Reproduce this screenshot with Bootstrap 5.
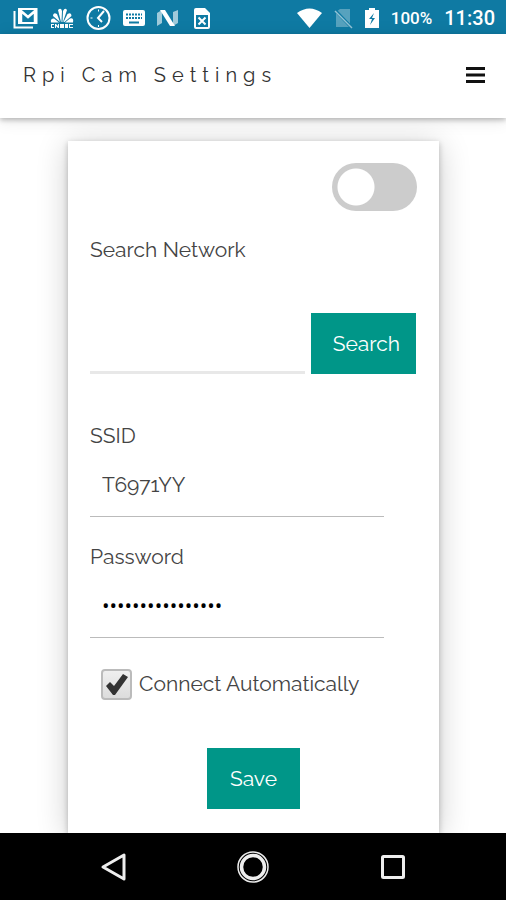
<!DOCTYPE html>
<html lang="en">
<head>
<meta charset="utf-8">
<meta name="viewport" content="width=device-width, initial-scale=1">
<title>Rpi Cam Settings</title>
<link href="https://cdn.jsdelivr.net/npm/bootstrap@5.3.0/dist/css/bootstrap.min.css" rel="stylesheet">
<style>
  body { font-family: Raleway, Lato, "Open Sans", sans-serif; font-size: 21px; line-height: 32px; color: #444; background: #fff; }
  .status-bar { background: #0f7aa3; font-family: Roboto, sans-serif; font-weight: 500; line-height: 34px; height: 34px; padding: 2px 11px 0 13px; }
  .status-icons { gap: 12px; }
  .status-info { gap: 12px; }
  .battery-text { font-size: 17px; }
  .clock-text { font-size: 20px; }
  .app-header { height: 84px; padding: 0 21px 2px 23px; background: #fff; box-shadow: 0 2px 5px rgba(0,0,0,.25), 0 2px 16px rgba(0,0,0,.1); z-index: 1; }
  .app-title { font-size: 20px; font-weight: 400; letter-spacing: 6px; color: #333; }
  .menu-btn { width: 19px; height: 32px; color: #111; }
  .page-area { padding-top: 23px; overflow: hidden; }
  .settings-panel { margin: 0 67px 0 68px; padding: 22px 22px 23px; box-shadow: 0 2px 6px rgba(0,0,0,.24), 0 4px 30px rgba(0,0,0,.2); background: #fff; }
  .power-switch.form-check-input { width: 85px; height: 48px; border: 0; border-radius: 24px; background: #ccc radial-gradient(circle at 24px 24px, #fff 18px, transparent 19px); }
  .power-switch.form-check-input:checked { background: #009688 radial-gradient(circle at 61px 24px, #fff 18px, transparent 19px); }
  .network-label { margin-top: 23px; }
  .search-row { margin: 47px 1px 46px 0; gap: 6px; }
  .line-input.form-control { border: 0; border-bottom: 1px solid #bbb; border-radius: 0; width: 90%; height: 65px; padding: 0 12px; font-size: 21px; color: #444; background: transparent; }
  .search-input.line-input { width: auto; min-width: 0; height: 61px; border-bottom: 3px solid #e8e8e8; }
  .secret-input.line-input { font-family: "Open Sans", sans-serif; font-size: 20px; color: #000; }
  .teal-btn { background: #009688; color: #fff; border: 0; border-radius: 0; height: 61px; font-size: 21px; font-weight: 400; padding: 0 22px; }
  .teal-btn:hover { background: #00796b; color: #fff; }
  .search-btn { width: 106px; padding-right: 16px; }
  .save-btn { width: 93px; }
  .auto-row { margin: 30px 0 48px 11px; gap: 7px; }
  .auto-check.form-check-input { width: 31px; height: 31px; border: 2px solid #bbb; border-radius: 4px; background: linear-gradient(#efefef, #dcdcdc); }
  .auto-check.form-check-input:checked { border-color: #bbb; background: url("data:image/svg+xml,%3csvg xmlns='http://www.w3.org/2000/svg' viewBox='0 0 27 27'%3e%3cpath d='M3 15l4-4 4 4L20 3l5 3L12 24H10z' fill='%23333'/%3e%3c/svg%3e") center/contain no-repeat, linear-gradient(#efefef, #dcdcdc); }
  .system-nav { background: #000; height: 67px; z-index: 1; }
  .system-nav button { background: none; border: 0; padding: 0; line-height: 0; width: 140px; }
</style>
<script src="https://cdn.jsdelivr.net/npm/bootstrap@5.3.0/dist/js/bootstrap.bundle.min.js"></script>
</head>
<body class="d-flex flex-column min-vh-100">
<div class="status-bar d-flex align-items-center justify-content-between text-white">
  <div class="status-icons d-flex align-items-center">
    <svg width="25" height="22" viewBox="0 0 25 22" fill="none" stroke="#fff"><path d="M1.500 4v16.500H20" stroke-width="2"/><path d="M6 2h17.500v14H6z" stroke-width="2"/><path d="M8 15V4l7 6 7-6v11" stroke-width="2.500"/></svg>
    <svg width="24" height="22" viewBox="0 0 24 22" fill="#fff"><path d="M11 15L8 3q3-3 4 1l-.5 11zM12.500 15L13 4q2-4 4-1l-4 12zM13.500 15l4-8q4-2 4 2l-7 6zM15 15.500l5-4q4-1 3 4zM10 15L3 9q0-4 4-2zM9 15.500H1q-1-4 3-4z"/><path d="M1 17h3v1H2v2h2v1H1zm4 4v-4h1l2 2v-2h1v4H8l-2-2v2zm5-4h4v4h-4zm5 0h3v4h-3zm4 0h4v1h-3v2h3v1h-4z"/></svg>
    <svg width="25" height="26" viewBox="0 0 25 26" fill="none" stroke="#fff"><circle cx="12.500" cy="13" r="11" stroke-width="2"/><path d="M18 6l-6 7 4 4" stroke-width="2"/><path d="M4.500 13h2M12.500 4.500v2M12.500 20v2" stroke-width="1"/></svg>
    <svg width="22" height="18" viewBox="0 0 22 18"><rect y="1" width="22" height="16" rx="2" fill="#fff"/><path d="M3 5.500h16M3 9h16" stroke="#0f7aa3" stroke-width="2" stroke-dasharray="2 1"/><path d="M6 13.500h10" stroke="#0f7aa3" stroke-width="2"/></svg>
    <svg width="21" height="18" viewBox="0 0 21 18"><path d="M0 4l5-3v13l-5 3zM16 3l5-2v13l-5 3z" fill="#fff" opacity=".6"/><path d="M3 1h5l10 16h-5z" fill="#fff"/></svg>
    <svg class="ms-1" width="16" height="23" viewBox="0 0 16 23"><path d="M2 1h9l5 5v14q0 2-2 2H2q-2 0-2-2V3q0-2 2-2z" fill="#fff"/><path d="M2 8h12v12H2z" fill="#0f7aa3"/><path d="M4.500 10.500l7 7m0-7l-7 7" stroke="#fff" stroke-width="2"/></svg>
  </div>
  <div class="status-info d-flex align-items-center">
    <svg width="25" height="21" viewBox="0 0 25 21"><path d="M0 5q12.500-9 25 0L12.500 20z" fill="#fff"/></svg>
    <svg width="19" height="21" viewBox="0 0 19 21"><path d="M2 4l4-3h10v18H2z" fill="#fff" opacity=".3"/><path d="M1 2l17 18" stroke="#0f7aa3" stroke-width="3"/><path d="M1 3l17 17" stroke="#fff" opacity=".55" stroke-width="1.500"/></svg>
    <svg width="14" height="22" viewBox="0 0 14 22"><path d="M4 1h6v2h4v18H0V3h4z" fill="#fff"/><path d="M9 6l-5 6h3l-2 6 5-7H7z" fill="#0f7aa3"/></svg>
    <span class="battery-text">100%</span>
    <span class="clock-text">11:30</span>
  </div>
</div>
<header class="app-header position-relative d-flex align-items-center justify-content-between">
  <h1 class="app-title m-0">Rpi Cam Settings</h1>
  <button class="menu-btn btn p-0 border-0 rounded-0 d-flex align-items-center" type="button" aria-label="Menu">
    <svg width="19" height="16" viewBox="0 0 19 16" stroke="currentColor" stroke-width="3"><path d="M0 1.500h19M0 8h19M0 14.500h19"/></svg>
  </button>
</header>
<main class="page-area flex-grow-1 d-flex flex-column">
  <form class="settings-panel flex-grow-1">
    <div class="d-flex justify-content-end">
      <input class="power-switch form-check-input m-0" type="checkbox" role="switch" aria-label="Network">
    </div>
    <label class="network-label d-block" for="network">Search Network</label>
    <div class="search-row d-flex">
      <input class="search-input line-input form-control flex-fill" id="network" type="text">
      <button class="search-btn teal-btn btn" type="button">Search</button>
    </div>
    <label class="d-block" for="ssid">SSID</label>
    <input class="line-input form-control mb-4" id="ssid" type="text" value="T6971YY">
    <label class="d-block" for="password">Password</label>
    <input class="secret-input line-input form-control" id="password" type="password" value="raspberrycamera1">
    <div class="auto-row d-flex align-items-center">
      <input class="auto-check form-check-input m-0" id="auto" type="checkbox" checked>
      <label for="auto">Connect Automatically</label>
    </div>
    <div class="text-center">
      <button class="save-btn teal-btn btn" type="submit">Save</button>
    </div>
  </form>
</main>
<nav class="system-nav position-relative d-flex align-items-center justify-content-center" aria-label="System">
  <button type="button" aria-label="Back"><svg width="26" height="30" viewBox="0 0 26 30" fill="none" stroke="#eee" stroke-width="3" stroke-linejoin="round"><path d="M24 3v24L3 15z"/></svg></button>
  <button type="button" aria-label="Home"><svg width="34" height="34" viewBox="0 0 34 34" fill="none" stroke="#eee"><circle cx="17" cy="17" r="15" stroke-width="1.500"/><circle cx="17" cy="17" r="11.500" stroke-width="3.500"/></svg></button>
  <button type="button" aria-label="Recent apps"><svg width="26" height="26" viewBox="0 0 26 26" fill="none" stroke="#eee" stroke-width="3"><rect x="2.500" y="2.500" width="21" height="21" rx="1"/></svg></button>
</nav>
</body>
</html>
